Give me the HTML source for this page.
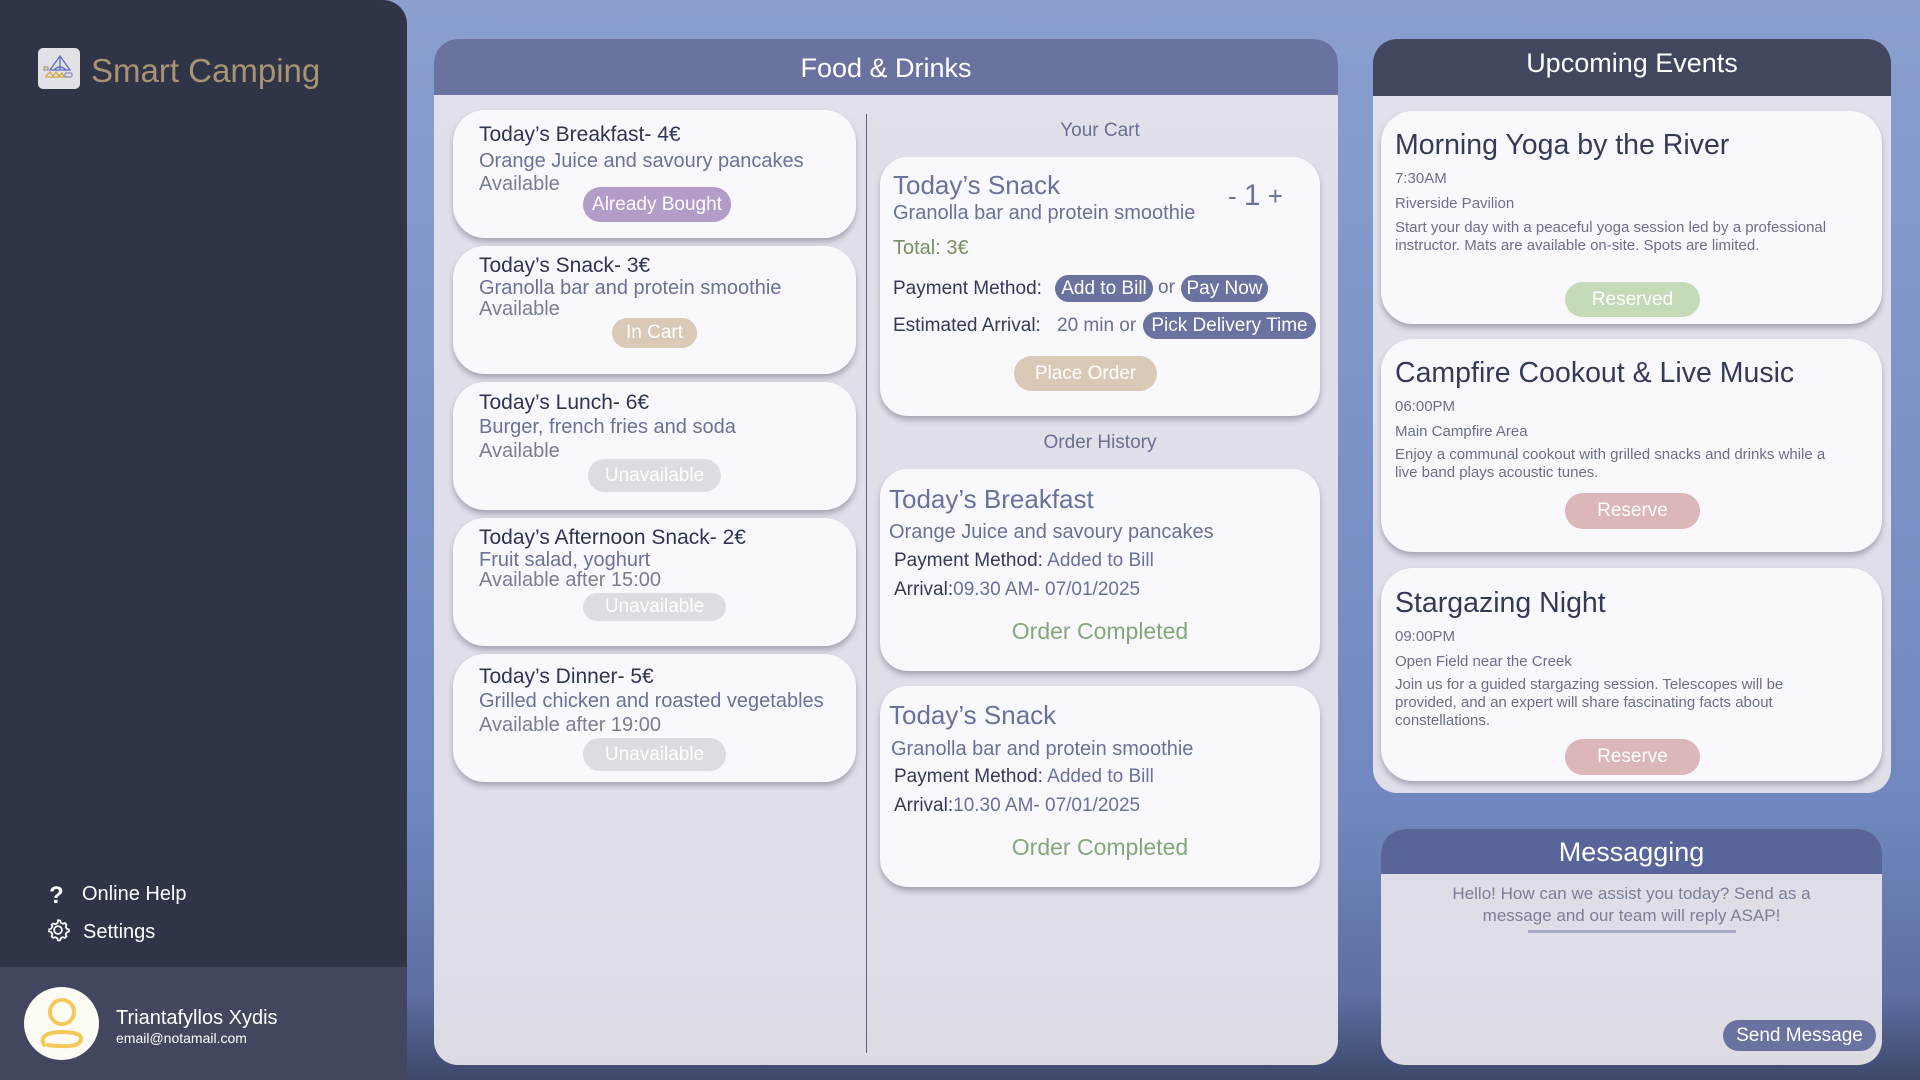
<!DOCTYPE html>
<html><head><meta charset="utf-8"><style>
*{margin:0;padding:0;box-sizing:border-box}
body{width:1920px;height:1080px;overflow:hidden;font-family:"Liberation Sans",sans-serif;position:relative;
background:linear-gradient(180deg,#8a9fd0 0%,#7d93c8 40%,#7088bf 75%,#5d6fa3 92%,#3e4769 100%)}
.a{position:absolute;white-space:nowrap}
.side{left:0;top:0;width:407px;height:1080px;background:#2f3447;border-radius:0 24px 0 0}
.user{left:0;top:967px;width:407px;height:113px;background:#42475f}
.panel{background:rgba(232,229,236,0.93);border-radius:24px;overflow:hidden}
.card{background:#f9f8fd;border-radius:32px;box-shadow:0 4px 6px rgba(60,60,80,0.35)}
.pill{border-radius:20px;color:#fff;text-align:center}
.t{color:#2f3550;font-size:21px}
.s{color:#6a7295;font-size:20px}
.ev{color:#353b55;font-size:28.5px}
.sm{color:#6b7088;font-size:15px}
</style></head><body>
<div class="a side"></div>
<div class="a" style="left:38px;top:48px;width:42px;height:41px;background:#e2e1e6;border-radius:5px">
<svg width="42" height="41" viewBox="0 0 42 41"><path d="M12 22 L22 8 L32 22 Z M22 8 V22 M16 22 Q22 16 28 22" fill="none" stroke="#5b6fc4" stroke-width="1.3"/><path d="M8 28 L12 24 L15 28 L18 24 L21 28 L24 25 L26 29 H8Z" fill="none" stroke="#d4a640" stroke-width="1.3"/><rect x="6" y="19" width="4" height="3" fill="none" stroke="#9b8a5c"/><rect x="27" y="25" width="7" height="4" rx="1" fill="none" stroke="#7a7fb0"/></svg></div>
<div class="a" style="left:91px;top:52px;font-size:33px;color:#a89472">Smart Camping</div>
<div class="a" style="left:49px;top:882px;font-size:24px;color:#fff;font-weight:bold">?</div>
<div class="a" style="left:82px;top:883px;font-size:20px;color:#fff">Online Help</div>
<svg class="a" style="left:45px;top:917px" width="26" height="26" viewBox="0 0 24 24"><path d="M12 3l2 .3.6 2 1.8 1 2-.7 1.4 1.5-.7 2 1 1.8 2 .6v2l-2 .6-1 1.8.7 2-1.5 1.4-2-.7-1.8 1-.6 2h-2l-.6-2-1.8-1-2 .7-1.4-1.5.7-2-1-1.8-2-.6v-2l2-.6 1-1.8-.7-2L7.6 6l2 .7 1.8-1 .6-2z" fill="none" stroke="#fff" stroke-width="1.6"/><circle cx="12" cy="12" r="3.6" fill="none" stroke="#fff" stroke-width="1.6"/></svg>
<div class="a" style="left:83px;top:921px;font-size:20px;color:#fff">Settings</div>
<div class="a user"></div>
<div class="a" style="left:24px;top:987px;width:75px;height:73px;border-radius:50%;background:#fdfcf5">
<svg width="75" height="73" viewBox="0 0 75 73"><circle cx="38" cy="25" r="12" fill="none" stroke="#f5c85a" stroke-width="4"/><path d="M20 58 Q14 46 36 45 Q58 45 57 52 Q56 60 38 59 Q28 59 24 58" fill="none" stroke="#f5c85a" stroke-width="4" stroke-linecap="round"/></svg></div>
<div class="a" style="left:116px;top:1007px;font-size:20px;color:#fff">Triantafyllos Xydis</div>
<div class="a" style="left:116px;top:1030px;font-size:14px;color:#fff">email@notamail.com</div>

<div class="a panel" style="left:434px;top:39px;width:904px;height:1026px"></div>
<div class="a" style="left:434px;top:39px;width:904px;height:56px;background:#6a729f;border-radius:24px 24px 0 0;color:#fff;font-size:27px;text-align:center;line-height:58px">Food &amp; Drinks</div>
<div class="a" style="left:866px;top:114px;width:1px;height:939px;background:#5a5f7a"></div>

<div class="a card" style="left:453px;top:110px;width:403px;height:128px">
<div class="a t" style="left:26px;top:13px">Today’s Breakfast- 4€</div>
<div class="a s" style="left:26px;top:40px">Orange Juice and savoury pancakes</div>
<div class="a s" style="left:26px;top:63px;color:#7a7e92">Available</div>
<div class="a pill" style="left:130px;top:77px;width:148px;height:35px;background:#b39cc8;font-size:19px;line-height:35px">Already Bought</div></div>
<div class="a card" style="left:453px;top:246px;width:403px;height:128px">
<div class="a t" style="left:26px;top:8px">Today’s Snack- 3€</div>
<div class="a s" style="left:26px;top:31px">Granolla bar and protein smoothie</div>
<div class="a s" style="left:26px;top:52px;color:#7a7e92">Available</div>
<div class="a pill" style="left:159px;top:72px;width:85px;height:30px;background:#d9c9b6;font-size:19px;line-height:30px">In Cart</div></div>
<div class="a card" style="left:453px;top:382px;width:403px;height:128px">
<div class="a t" style="left:26px;top:9px">Today’s Lunch- 6€</div>
<div class="a s" style="left:26px;top:34px">Burger, french fries and soda</div>
<div class="a s" style="left:26px;top:58px;color:#7a7e92">Available</div>
<div class="a pill" style="left:135px;top:77px;width:133px;height:33px;background:#dddce2;font-size:19px;line-height:33px">Unavailable</div></div>
<div class="a card" style="left:453px;top:518px;width:403px;height:128px">
<div class="a t" style="left:26px;top:8px">Today’s Afternoon Snack- 2€</div>
<div class="a s" style="left:26px;top:31px">Fruit salad, yoghurt</div>
<div class="a s" style="left:26px;top:51px;color:#7a7e92">Available after 15:00</div>
<div class="a pill" style="left:130px;top:75px;width:143px;height:28px;background:#dddce2;font-size:19px;line-height:28px">Unavailable</div></div>
<div class="a card" style="left:453px;top:654px;width:403px;height:128px">
<div class="a t" style="left:26px;top:11px">Today’s Dinner- 5€</div>
<div class="a s" style="left:26px;top:36px">Grilled chicken and roasted vegetables</div>
<div class="a s" style="left:26px;top:60px;color:#7a7e92">Available after 19:00</div>
<div class="a pill" style="left:130px;top:84px;width:143px;height:33px;background:#dddce2;font-size:19px;line-height:33px">Unavailable</div></div>

<div class="a" style="left:880px;top:120px;width:440px;text-align:center;font-size:19px;color:#6a7090">Your Cart</div>
<div class="a card" style="left:880px;top:157px;width:440px;height:259px;border-radius:28px">
<div class="a" style="left:13px;top:13px;font-size:26px;color:#6a7299">Today’s Snack</div>
<div class="a s" style="left:13px;top:45px">Granolla bar and protein smoothie</div>
<div class="a" style="left:348px;top:22px;font-size:30px;color:#6a7299"><span style="font-size:26px">- </span>1<span style="font-size:26px"> +</span></div>
<div class="a" style="left:13px;top:80px;font-size:20px;color:#7a9060">Total: 3€</div>
<div class="a" style="left:13px;top:121px;font-size:19px;color:#343a55">Payment Method:</div>
<div class="a pill" style="left:175px;top:118px;width:98px;height:27px;background:#6a729f;font-size:19px;line-height:27px">Add to Bill</div>
<div class="a" style="left:278px;top:120px;font-size:19px;color:#6a7090">or</div>
<div class="a pill" style="left:301px;top:118px;width:87px;height:27px;background:#6a729f;font-size:19px;line-height:27px">Pay Now</div>
<div class="a" style="left:13px;top:158px;font-size:19px;color:#343a55">Estimated Arrival:</div>
<div class="a" style="left:177px;top:158px;font-size:19px;color:#6a7090">20 min or</div>
<div class="a pill" style="left:263px;top:155px;width:173px;height:27px;background:#6a729f;font-size:19px;line-height:27px">Pick Delivery Time</div>
<div class="a pill" style="left:134px;top:199px;width:143px;height:35px;background:#d9c9b6;font-size:19px;line-height:35px">Place Order</div></div>

<div class="a" style="left:880px;top:432px;width:440px;text-align:center;font-size:19px;color:#6a7090">Order History</div>
<div class="a card" style="left:880px;top:469px;width:440px;height:202px;border-radius:28px">
<div class="a" style="left:9px;top:15px;font-size:26px;color:#6a7299">Today’s Breakfast</div>
<div class="a s" style="left:9px;top:52px">Orange Juice and savoury pancakes</div>
<div class="a" style="left:14px;top:81px;font-size:19px;color:#343a55">Payment Method: <span style="color:#6a7299">Added to Bill</span></div>
<div class="a" style="left:14px;top:110px;font-size:19px;color:#343a55">Arrival:<span style="color:#6a7299">09.30 AM- 07/01/2025</span></div>
<div class="a" style="left:0;top:149px;width:440px;text-align:center;font-size:23px;color:#86a878">Order Completed</div></div>
<div class="a card" style="left:880px;top:686px;width:440px;height:201px;border-radius:28px">
<div class="a" style="left:9px;top:14px;font-size:26px;color:#6a7299">Today’s Snack</div>
<div class="a s" style="left:11px;top:52px">Granolla bar and protein smoothie</div>
<div class="a" style="left:14px;top:80px;font-size:19px;color:#343a55">Payment Method: <span style="color:#6a7299">Added to Bill</span></div>
<div class="a" style="left:14px;top:109px;font-size:19px;color:#343a55">Arrival:<span style="color:#6a7299">10.30 AM- 07/01/2025</span></div>
<div class="a" style="left:0;top:148px;width:440px;text-align:center;font-size:23px;color:#86a878">Order Completed</div></div>

<div class="a panel" style="left:1373px;top:39px;width:518px;height:754px"></div>
<div class="a" style="left:1373px;top:39px;width:518px;height:57px;background:#40475f;border-radius:24px 24px 0 0;color:#fff;font-size:27px;text-align:center;line-height:48px">Upcoming Events</div>
<div class="a card" style="left:1381px;top:111px;width:501px;height:213px">
<div class="a ev" style="left:14px;top:18px">Morning Yoga by the River</div>
<div class="a sm" style="left:14px;top:59px">7:30AM</div>
<div class="a sm" style="left:14px;top:84px">Riverside Pavilion</div>
<div class="a sm" style="left:14px;top:108px;line-height:18px">Start your day with a peaceful yoga session led by a professional<br>instructor. Mats are available on-site. Spots are limited.</div>
<div class="a pill" style="left:184px;top:171px;width:135px;height:35px;background:#c5dbb8;font-size:19px;line-height:35px">Reserved</div></div>
<div class="a card" style="left:1381px;top:339px;width:501px;height:213px">
<div class="a ev" style="left:14px;top:18px">Campfire Cookout &amp; Live Music</div>
<div class="a sm" style="left:14px;top:59px">06:00PM</div>
<div class="a sm" style="left:14px;top:84px">Main Campfire Area</div>
<div class="a sm" style="left:14px;top:107px;line-height:18px">Enjoy a communal cookout with grilled snacks and drinks while a<br>live band plays acoustic tunes.</div>
<div class="a pill" style="left:184px;top:154px;width:135px;height:36px;background:#dbb7b9;font-size:19px;line-height:36px">Reserve</div></div>
<div class="a card" style="left:1381px;top:568px;width:501px;height:213px">
<div class="a ev" style="left:14px;top:19px">Stargazing Night</div>
<div class="a sm" style="left:14px;top:60px">09:00PM</div>
<div class="a sm" style="left:14px;top:85px">Open Field near the Creek</div>
<div class="a sm" style="left:14px;top:108px;line-height:18px">Join us for a guided stargazing session. Telescopes will be<br>provided, and an expert will share fascinating facts about<br>constellations.</div>
<div class="a pill" style="left:184px;top:171px;width:135px;height:36px;background:#dbb7b9;font-size:19px;line-height:36px">Reserve</div></div>

<div class="a panel" style="left:1381px;top:829px;width:501px;height:236px"></div>
<div class="a" style="left:1381px;top:829px;width:501px;height:45px;background:#58649a;border-radius:24px 24px 0 0;color:#fff;font-size:27px;text-align:center;line-height:47px">Messagging</div>
<div class="a" style="left:1381px;top:883px;width:501px;text-align:center;font-size:17px;line-height:22px;color:#7a7f98;white-space:normal">Hello! How can we assist you today? Send as a<br>message and our team will reply ASAP!</div>
<div class="a" style="left:1528px;top:930px;width:208px;height:3px;background:#a7abc6"></div>
<div class="a pill" style="left:1723px;top:1020px;width:153px;height:31px;background:#6a729f;font-size:19px;line-height:31px">Send Message</div>
</body></html>
